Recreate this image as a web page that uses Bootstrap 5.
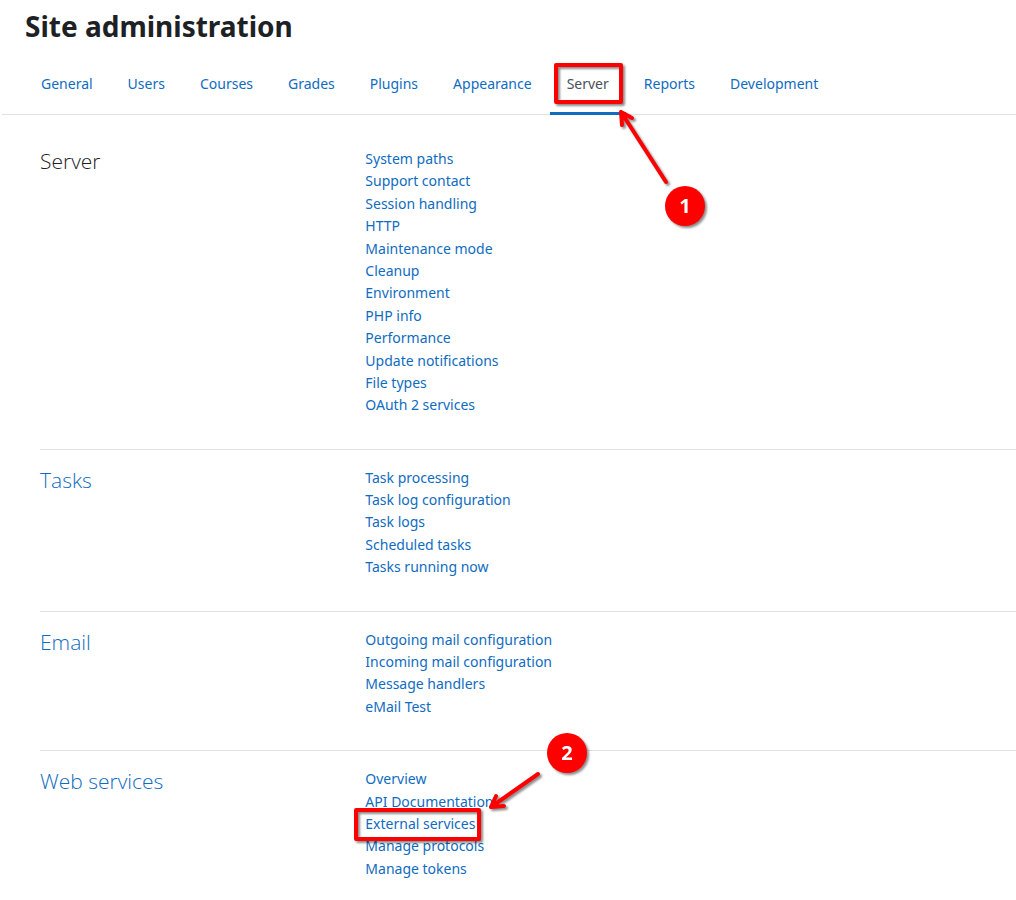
<!DOCTYPE html>
<html lang="en">
<head>
<meta charset="utf-8">
<meta name="viewport" content="width=device-width, initial-scale=1">
<title>Site administration</title>
<link href="https://cdn.jsdelivr.net/npm/bootstrap@5.3.0/dist/css/bootstrap.min.css" rel="stylesheet">
<style>
  body { font-family: "Noto Sans", "Segoe UI", sans-serif; font-size: 14px; line-height: 1.6; color: #1d2125; overflow-x: hidden; }
  a { color: #0f6cbf; text-decoration: none; }
  a:hover { text-decoration: underline; }
  .page-title { font-size: 28px; font-weight: 700; line-height: 34px; padding: 9px 0 9px 25px; }
  .admin-tabs { margin-left: 2px; padding-left: 22px; gap: 1px; border-bottom: 1px solid #dee2e6; }
  .admin-tabs .nav-link { color: #0f6cbf; padding: 20px 17px 16px; line-height: 24px; border-bottom: 3px solid transparent; margin-bottom: -1px; }
  .admin-tabs .nav-link.active { color: #495057; border-bottom-color: #0f6cbf; }
  .admin-sections { padding: 16px 0 0 40px; }
  .admin-section { padding: 17px 0 32px; border-bottom: 1px solid #dfdfdf; }
  .admin-section:last-child { border-bottom: 0; padding-bottom: 16px; }
  .section-name { font-family: "Open Sans", "Segoe UI", sans-serif; font-size: 21px; font-weight: 300; line-height: 26px; }
  .callout { position: absolute; overflow: visible; pointer-events: none; z-index: 2; filter: drop-shadow(2px 2px 1px rgba(0,0,0,.45)); }
  .callout-tab { left: 4px; top: -4px; }
  .callout-link { left: -11px; top: -80px; }
  .callout text { font: 700 20px "Open Sans", sans-serif; fill: #fff; text-anchor: middle; }
  .stroke-red { fill: none; stroke: #fe0000; stroke-width: 4; stroke-linecap: round; stroke-linejoin: round; }
</style>
</head>
<body>
<header>
  <h1 class="page-title mb-0">Site administration</h1>
  <nav aria-label="Administration">
    <ul class="nav admin-tabs">
      <li class="nav-item"><a class="nav-link" href="#general">General</a></li>
      <li class="nav-item"><a class="nav-link" href="#users">Users</a></li>
      <li class="nav-item"><a class="nav-link" href="#courses">Courses</a></li>
      <li class="nav-item"><a class="nav-link" href="#grades">Grades</a></li>
      <li class="nav-item"><a class="nav-link" href="#plugins">Plugins</a></li>
      <li class="nav-item"><a class="nav-link" href="#appearance">Appearance</a></li>
      <li class="nav-item position-relative">
        <a class="nav-link active" aria-current="page" href="#server">Server</a>
        <svg class="callout callout-tab" width="152" height="166" viewBox="0 0 152 166">
          <rect class="stroke-red" x="2" y="17" width="65" height="37"/>
          <path class="stroke-red" d="M112 134 L67 64 M68 77 L67 64 L78 70"/>
          <circle cx="131" cy="158" r="20" fill="#fe0000"/>
          <text x="131" y="165">1</text>
        </svg>
      </li>
      <li class="nav-item"><a class="nav-link" href="#reports">Reports</a></li>
      <li class="nav-item"><a class="nav-link" href="#development">Development</a></li>
    </ul>
  </nav>
</header>
<main class="admin-sections">
  <section class="admin-section row g-0" id="server">
    <div class="col-4"><h2 class="section-name mb-0">Server</h2></div>
    <ul class="col-8 list-unstyled mb-0">
      <li><a href="#">System paths</a></li>
      <li><a href="#">Support contact</a></li>
      <li><a href="#">Session handling</a></li>
      <li><a href="#">HTTP</a></li>
      <li><a href="#">Maintenance mode</a></li>
      <li><a href="#">Cleanup</a></li>
      <li><a href="#">Environment</a></li>
      <li><a href="#">PHP info</a></li>
      <li><a href="#">Performance</a></li>
      <li><a href="#">Update notifications</a></li>
      <li><a href="#">File types</a></li>
      <li><a href="#">OAuth 2 services</a></li>
    </ul>
  </section>
  <section class="admin-section row g-0">
    <div class="col-4"><h2 class="section-name mb-0"><a href="#">Tasks</a></h2></div>
    <ul class="col-8 list-unstyled mb-0">
      <li><a href="#">Task processing</a></li>
      <li><a href="#">Task log configuration</a></li>
      <li><a href="#">Task logs</a></li>
      <li><a href="#">Scheduled tasks</a></li>
      <li><a href="#">Tasks running now</a></li>
    </ul>
  </section>
  <section class="admin-section row g-0">
    <div class="col-4"><h2 class="section-name mb-0"><a href="#">Email</a></h2></div>
    <ul class="col-8 list-unstyled mb-0">
      <li><a href="#">Outgoing mail configuration</a></li>
      <li><a href="#">Incoming mail configuration</a></li>
      <li><a href="#">Message handlers</a></li>
      <li><a href="#">eMail Test</a></li>
    </ul>
  </section>
  <section class="admin-section row g-0">
    <div class="col-4"><h2 class="section-name mb-0"><a href="#">Web services</a></h2></div>
    <ul class="col-8 list-unstyled mb-0">
      <li><a href="#">Overview</a></li>
      <li><a href="#">API Documentation</a></li>
      <li class="position-relative">
        <a href="#">External services</a>
        <svg class="callout callout-link" width="236" height="110" viewBox="0 0 236 110">
          <rect class="stroke-red" x="2" y="77" width="123" height="29"/>
          <path class="stroke-red" d="M184 41 L137 74 M142 63 L137 74 L150 73"/>
          <circle cx="213" cy="20" r="20" fill="#fe0000"/>
          <text x="213" y="27">2</text>
        </svg>
      </li>
      <li><a href="#">Manage protocols</a></li>
      <li><a href="#">Manage tokens</a></li>
    </ul>
  </section>
</main>
<script src="https://cdn.jsdelivr.net/npm/bootstrap@5.3.0/dist/js/bootstrap.bundle.min.js"></script>
</body>
</html>
